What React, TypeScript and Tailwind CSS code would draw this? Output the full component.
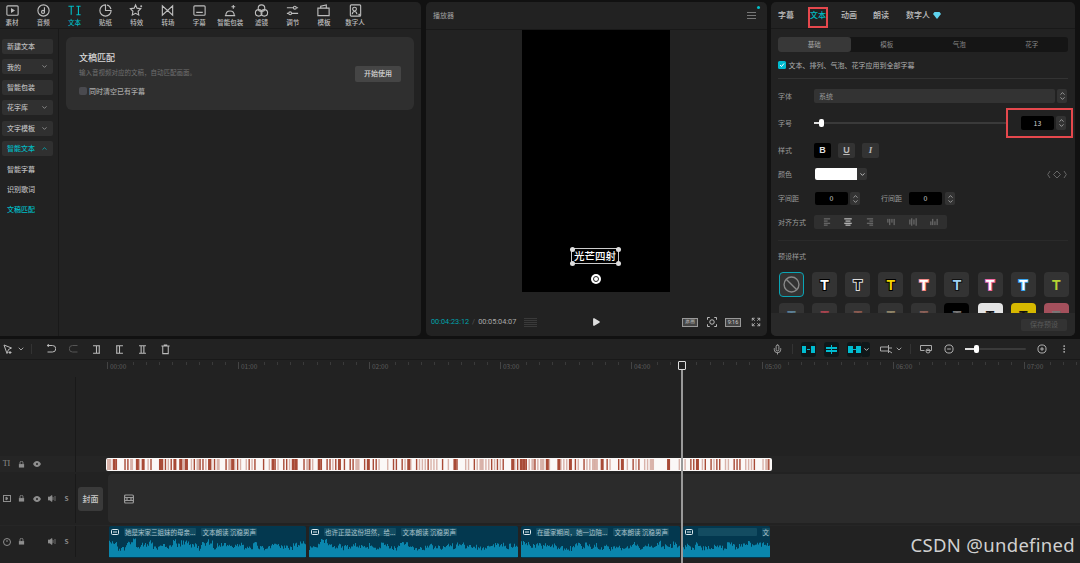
import { ChevronDown, ChevronUp, Mic, MoreVertical, Play } from "lucide-react";
import type { ReactNode } from "react";

const TABS: { label: string; icon: ReactNode }[] = [
  { label: "素材", icon: <><rect x="2" y="3" width="12" height="10" rx="1" /><path d="M7 6.5v3l2.5-1.5z" fill="currentColor" /></> },
  { label: "音频", icon: <><circle cx="8" cy="8" r="6" /><circle cx="7.5" cy="9.5" r="1.6" /><path d="M9 9.5V4.5" /></> },
  { label: "文本", icon: <path d="M1.5 3.5h6M4.5 3.5v9M10 3.5h4.5M12.2 3.5v9M10 12.5h4.5" /> },
  { label: "贴纸", icon: <><path d="M8 2a6 6 0 1 0 6 6H8z" /><path d="M9.5 2.2a6 6 0 0 1 4.3 4.3" /></> },
  { label: "特效", icon: <><path d="M7 2l1.5 3.5 4 .5-2.8 2.8.7 4L7 11l-3.5 1.8.7-4L1.5 6l4-.5z" /><path d="M13 2.5v2M12 3.5h2" /></> },
  { label: "转场", icon: <path d="M2.5 3v10L8 8zM13.5 3v10L8 8z" /> },
  { label: "字幕", icon: <><rect x="2" y="3" width="12" height="10" rx="1" /><path d="M4.5 10h7" /></> },
  { label: "智能包装", icon: <><path d="M2 13.5h11M3 13.5c0-3 1.5-5 4.5-5s4.5 2 4.5 5" /><path d="M11 2v4M9 4h4" /></> },
  { label: "滤镜", icon: <><circle cx="8" cy="5.5" r="3.5" /><circle cx="5" cy="10.5" r="3.5" /><circle cx="11" cy="10.5" r="3.5" /></> },
  { label: "调节", icon: <><path d="M2 5h7M12 5h2M2 11h2M7 11h7" /><circle cx="10.5" cy="5" r="1.5" /><circle cx="5.5" cy="11" r="1.5" /></> },
  { label: "模板", icon: <><path d="M2 5.5h12v8H2z" /><path d="M5 5.5V3.5l6-1.5v3.5" /></> },
  { label: "数字人", icon: <><rect x="2.5" y="2" width="11" height="12" rx="1" /><circle cx="7" cy="6.5" r="2" /><path d="M4.5 12c.3-2 1.2-3 2.5-3s2.2 1 2.5 3M12 11.5v2M11 12.5h2" /></> },
];

const SIDE = [
  { label: "新建文本", box: true },
  { label: "我的", box: true, down: true },
  { label: "智能包装", box: true },
  { label: "花字库", box: true, down: true },
  { label: "文字模板", box: true, down: true },
  { label: "智能文本", box: true, up: true, on: true },
  { label: "智能字幕" },
  { label: "识别歌词" },
  { label: "文稿匹配", on: true },
];

const PRESETS = [
  "text-white [-webkit-text-stroke:2px_#000]",
  "text-[#111] [-webkit-text-stroke:2px_#ddd]",
  "text-[#f5d400] [-webkit-text-stroke:2px_#000]",
  "text-white [-webkit-text-stroke:2px_#f08a8a]",
  "text-[#9fd2f5] [-webkit-text-stroke:2px_#111]",
  "text-white [-webkit-text-stroke:2px_#f06aa8]",
  "text-white [-webkit-text-stroke:2px_#3aa5f0]",
  "text-[#b7d334] [-webkit-text-stroke:2px_#333]",
];

const PRESETS_2 = [
  "bg-[#333] text-[#5b7f95]",
  "bg-[#333] text-[#a8434f]",
  "bg-[#333] text-[#8a5a50]",
  "bg-[#333] text-[#8f8468]",
  "bg-[#333] text-[#8a6058]",
  "bg-black text-[#777]",
  "bg-[#e4e4e4] text-[#111]",
  "bg-[#d6b800] text-[#111]",
  "bg-[#a4505c] text-[#777]",
];

const CLIPS = [
  { width: 197, gap: 3, text: "她是宋家三姐妹的母亲...", voice: "文本朗读 沉稳男声" },
  { width: 209, gap: 3, text: "也许正是这份坦然，给...", voice: "文本朗读 沉稳男声" },
  { width: 159, gap: 3, text: "在盛家期间，她一边陪...", voice: "文本朗读 沉稳男声" },
  { width: 87, gap: 0, text: "", voice: "文" },
];

function rand(seed: number) {
  const x = Math.sin(seed * 91.17) * 43758.5453;
  return x - Math.floor(x);
}

function Glyph({ size = 16, className = "", children }: { size?: number; className?: string; children: ReactNode }) {
  return (
    <svg width={size} height={size} viewBox="0 0 16 16" fill="none" stroke="currentColor" strokeWidth="1.2" className={className}>
      {children}
    </svg>
  );
}

function Stepper() {
  return (
    <div className="flex h-full w-[10px] shrink-0 flex-col items-center justify-center rounded-[2px] bg-[#333] text-[#bbb]">
      <ChevronUp size={7} strokeWidth={2.5} className="-mb-[1px]" />
      <ChevronDown size={7} strokeWidth={2.5} className="-mt-[1px]" />
    </div>
  );
}

function Sidebar() {
  return (
    <div className="flex w-[59px] shrink-0 flex-col gap-[5.4px] border-r border-[#191919] pl-[2px] pr-[5px] pt-[10px]">
      {SIDE.map((s) => (
        <div
          key={s.label}
          className={`flex h-[15px] items-center justify-between rounded-[2px] pl-[5px] pr-[5px] text-[7px] font-medium ${s.box ? "bg-[#303030]" : ""} ${s.on ? "text-[#00bcc4]" : "text-[#bdbdbd]"}`}
        >
          <span>{s.label}</span>
          {s.down && <ChevronDown size={7} strokeWidth={2.5} className="text-[#aaa]" />}
          {s.up && <ChevronUp size={7} strokeWidth={2.5} />}
        </div>
      ))}
    </div>
  );
}

function MediaPanel() {
  return (
    <section className="flex w-[421px] shrink-0 flex-col overflow-hidden rounded-r-[5px] bg-[#222]">
      <div className="flex h-[27px] shrink-0 border-b border-[#191919]">
        {TABS.map((t, i) => (
          <div key={t.label} className={`flex w-[31.2px] flex-col items-center pt-[1px] text-[6.5px] font-medium leading-[8px] first:-ml-[3.6px] ${i === 2 ? "text-[#00bcc4]" : "text-[#bdbdbd]"}`}>
            <Glyph size={15}>{t.icon}</Glyph>
            <span className="whitespace-nowrap">{t.label}</span>
          </div>
        ))}
      </div>
      <div className="flex flex-1">
        <Sidebar />
        <div className="flex-1 px-[7px] pt-[8px]">
          <div className="flex h-[73px] items-center justify-between rounded-[6px] bg-[#2f2f2f] pl-[13px] pr-[13px]">
            <div>
              <div className="text-[9px] font-medium leading-[12px] text-[#d8d8d8]">文稿匹配</div>
              <div className="mt-[4px] text-[6.5px] leading-[9px] text-[#6f6f6f]">输入音视频对应的文稿，自动匹配画面。</div>
              <div className="mt-[9px] flex items-center gap-[2px] text-[7px] font-medium leading-[10px] text-[#a8a8a8]">
                <span className="h-[8px] w-[8px] rounded-[2px] bg-[#4a4a4f]" />
                同时清空已有字幕
              </div>
            </div>
            <div className="flex h-[16px] w-[46px] items-center justify-center rounded-[2px] bg-[#454545] text-[7px] font-medium text-[#d8d8d8]">开始使用</div>
          </div>
        </div>
      </div>
    </section>
  );
}

function PlayerPanel() {
  return (
    <section className="relative ml-[1px] flex w-[341px] shrink-0 flex-col overflow-hidden rounded-[5px] bg-[#222]">
      <div className="flex h-[28px] shrink-0 items-center justify-between border-b border-[#191919] pl-[7px] pr-[11px] text-[7px] text-[#a0a0a0]">
        <span>播放器</span>
        <span className="flex w-[9px] flex-col gap-[2px]">
          <i className="h-px bg-[#777]" />
          <i className="h-px bg-[#777]" />
          <i className="h-px bg-[#777]" />
        </span>
      </div>
      <span className="absolute right-[7px] top-[4px] h-[3px] w-[3px] rounded-full bg-[#00c2cc]" />
      <div className="relative ml-[96px] h-[262px] w-[148px] shrink-0 bg-black">
        <div className="absolute left-[49px] top-[218px] flex h-[16px] w-[48px] items-center justify-center border border-[#ccc] text-[10.5px] font-medium leading-none text-white">
          光芒四射
          <i className="absolute -left-[2.5px] -top-[2.5px] h-[5px] w-[5px] rounded-full bg-[#ddd]" />
          <i className="absolute -right-[2.5px] -top-[2.5px] h-[5px] w-[5px] rounded-full bg-[#ddd]" />
          <i className="absolute -bottom-[2.5px] -left-[2.5px] h-[5px] w-[5px] rounded-full bg-[#ddd]" />
          <i className="absolute -bottom-[2.5px] -right-[2.5px] h-[5px] w-[5px] rounded-full bg-[#ddd]" />
        </div>
        <div className="absolute left-[69px] top-[244px] flex h-[10px] w-[10px] items-center justify-center rounded-full bg-white">
          <span className="h-[6px] w-[6px] rounded-full border-[1.5px] border-[#222]" />
        </div>
      </div>
      <div className="flex flex-1 items-center pb-[1px] pl-[5px] pr-[6px] pt-[17px] font-[Roboto] text-[7.3px]">
        <span className="text-[#00a2ad]">00:04:23:12</span>
        <span className="mx-[3px] text-[#555]">/</span>
        <span className="text-[#aaa]">00:05:04:07</span>
        <span className="ml-[8px] grid h-[10px] w-[13px] grid-cols-2 gap-x-[1px] bg-[repeating-linear-gradient(0deg,#3a3a3a_0_1px,transparent_1px_2px)]" />
        <Play size={10} fill="#ddd" strokeWidth={0} className="ml-[54px] text-[#ddd]" />
        <span className="ml-auto flex h-[9px] w-[16px] items-center justify-center border border-[#999] bg-[#444] text-[5px] text-[#ccc]">原画</span>
        <Glyph size={12} className="ml-[8px] text-[#ccc]">
          <path d="M2 5V2h3M11 2h3v3M14 11v3h-3M5 14H2v-3" />
          <circle cx="8" cy="8" r="3" />
        </Glyph>
        <span className="ml-[7px] flex h-[9px] w-[16px] items-center justify-center border border-[#999] bg-[#444] text-[5.5px] text-[#ccc]">9:16</span>
        <Glyph size={10} className="ml-[10px] text-[#ccc]">
          <path d="M2 6V2h4M10 2h4v4M14 10v4h-4M6 14H2v-4M2 2l4 4M14 2l-4 4M14 14l-4-4M2 14l4-4" />
        </Glyph>
      </div>
    </section>
  );
}

function FieldRow({ label, className, children }: { label: string; className: string; children: ReactNode }) {
  return (
    <div className={`flex items-center ${className}`}>
      <span className="w-[36px] shrink-0 text-[7px] text-[#9a9a9a]">{label}</span>
      {children}
    </div>
  );
}

function NumberBox({ value }: { value: string }) {
  return <div className="flex h-full w-[33px] items-center justify-center rounded-[2px] bg-black text-[7px] text-[#ccc]">{value}</div>;
}

function AlignIcon({ lines, vertical, on }: { lines: string; vertical?: boolean; on?: boolean }) {
  return (
    <Glyph size={10} className={`${on ? "text-[#ddd]" : "text-[#777]"} ${vertical ? "rotate-90" : ""}`}>
      <path d={lines} strokeWidth="1.6" />
    </Glyph>
  );
}

function TextPanel() {
  return (
    <section className="relative flex w-[304px] shrink-0 flex-col overflow-hidden rounded-[5px] bg-[#222]">
      <div className="flex h-[27px] shrink-0 items-center border-b border-[#191919] pl-[7px] text-[8px] font-medium text-[#c0c0c0]">
        <span>字幕</span>
        <span className="ml-[16px] text-[#00bcc4]">文本</span>
        <span className="ml-[15px]">动画</span>
        <span className="ml-[16px]">朗读</span>
        <span className="ml-[17px]">数字人</span>
        <svg width="8" height="7" viewBox="0 0 8 7" className="ml-[3px]"><path d="M1.5 0h5L8 2 4 7 0 2z" fill="#5fd3ee" /></svg>
      </div>
      <div className="flex flex-1 flex-col overflow-hidden px-[7px]">
        <div className="mt-[8px] grid h-[15px] shrink-0 grid-cols-4 rounded-[3px] bg-[#151515] text-center text-[6.5px] leading-[15px] text-[#888]">
          <span className="rounded-[3px] bg-[#383838] text-[#aaa]">基础</span>
          <span>模板</span>
          <span>气泡</span>
          <span>花字</span>
        </div>
        <div className="mt-[8px] flex h-[10px] shrink-0 items-center gap-[3px] text-[7px] text-[#b0b0b0]">
          <span className="flex h-[7.5px] w-[7.5px] items-center justify-center rounded-[1.5px] bg-[#00bcd0]">
            <svg width="6" height="6" viewBox="0 0 6 6"><path d="M1 3l1.5 1.5L5 1.5" stroke="#fff" strokeWidth="1" fill="none" /></svg>
          </span>
          文本、排列、气泡、花字应用到全部字幕
        </div>
        <div className="mt-[8px] h-px shrink-0 bg-[#333]" />
        <FieldRow label="字体" className="mt-[10px] h-[14px] shrink-0">
          <div className="flex h-full w-[241px] items-center rounded-[2px] bg-[#333] pl-[5px] text-[7px] text-[#999]">系统</div>
          <span className="ml-[2px] h-full"><Stepper /></span>
        </FieldRow>
        <FieldRow label="字号" className="mt-[13px] h-[14px] shrink-0">
          <div className="relative h-[2px] w-[194px] rounded-full bg-[#3a3a3a]">
            <span className="absolute left-0 top-0 h-[2px] w-[7px] bg-[#ddd]" />
            <span className="absolute -top-[3px] left-[5px] h-[8px] w-[5px] rounded-[2px] bg-white" />
          </div>
          <span className="ml-[13px] h-full"><NumberBox value="13" /></span>
          <span className="ml-[2px] h-full"><Stepper /></span>
        </FieldRow>
        <FieldRow label="样式" className="mt-[13px] h-[15px] shrink-0">
          <span className="flex h-full w-[17px] items-center justify-center rounded-[2px] bg-black font-['Liberation_Sans'] text-[9px] font-bold text-[#ddd]">B</span>
          <span className="ml-[7px] flex h-full w-[17px] items-center justify-center rounded-[2px] bg-[#333] font-['Liberation_Sans'] text-[9px] font-bold text-[#bbb] underline">U</span>
          <span className="ml-[7px] flex h-full w-[17px] items-center justify-center rounded-[2px] bg-[#333] font-['Liberation_Serif'] text-[9px] font-bold italic text-[#bbb]">I</span>
        </FieldRow>
        <FieldRow label="颜色" className="mt-[10px] h-[12px] shrink-0">
          <span className="ml-[1px] h-full w-[42px] rounded-l-[2px] bg-white" />
          <span className="flex h-full w-[10px] items-center justify-center rounded-r-[2px] bg-[#333] text-[#ccc]">
            <ChevronDown size={7} strokeWidth={3} />
          </span>
          <svg width="20" height="9" viewBox="0 0 20 9" fill="none" stroke="#666" className="ml-auto mr-[1px]">
            <path d="M3 1L.7 4.5 3 8M17 1l2.3 3.5L17 8M10 1l3.5 3.5L10 8 6.5 4.5z" />
          </svg>
        </FieldRow>
        <FieldRow label="字间距" className="mt-[12px] h-[13px] shrink-0">
          <span className="ml-[1px] h-full"><NumberBox value="0" /></span>
          <span className="ml-[2px] h-full"><Stepper /></span>
          <span className="ml-[21px] w-[28px] text-[7px] text-[#9a9a9a]">行间距</span>
          <span className="h-full"><NumberBox value="0" /></span>
          <span className="ml-[3px] h-full"><Stepper /></span>
        </FieldRow>
        <FieldRow label="对齐方式" className="mt-[10px] h-[14px] shrink-0">
          <div className="flex h-full w-[133px] items-center justify-around rounded-[2px] bg-[#2f2f2f] px-[2px]">
            <AlignIcon lines="M3 3h10M3 6.5h6M3 10h10M3 13h6" />
            <AlignIcon on lines="M2 3h12M4 6.5h8M2 10h12M4 13h8" />
            <AlignIcon lines="M3 3h10M7 6.5h6M3 10h10M7 13h6" />
            <AlignIcon vertical lines="M3 3h10M3 6.5h6M3 10h10M3 13h6" />
            <AlignIcon vertical lines="M2 3h12M4 6.5h8M2 10h12M4 13h8" />
            <AlignIcon vertical lines="M3 3h10M7 6.5h6M3 10h10M7 13h6" />
          </div>
        </FieldRow>
        <div className="mt-[11px] h-px shrink-0 bg-[#2a2a2a]" />
        <div className="mt-[10px] h-[10px] shrink-0 text-[7px] leading-[10px] text-[#9a9a9a]">预设样式</div>
        <div className="mt-[11px] grid shrink-0 grid-cols-[repeat(9,25px)] gap-x-[8.1px] gap-y-[6px] pl-[1px]">
          <div className="flex h-[25px] items-center justify-center rounded-[4px] border border-[#0aa5b5] bg-[#333]">
            <svg width="17" height="17" viewBox="0 0 16 16" fill="none" stroke="#888" strokeWidth="1.3"><circle cx="8" cy="8" r="7" /><path d="M3 3l10 10" /></svg>
          </div>
          {PRESETS.map((p) => (
            <div key={p} className="flex h-[25px] items-center justify-center rounded-[4px] bg-[#333]">
              <span className={`font-['Liberation_Sans'] text-[14px] font-bold leading-none [paint-order:stroke_fill] ${p}`}>T</span>
            </div>
          ))}
          {PRESETS_2.map((p, i) => (
            <div key={i} className={`flex h-[25px] items-center justify-center rounded-[4px] text-[14px] font-bold leading-none ${p}`}>
              <span className="font-['Liberation_Sans']">T</span>
            </div>
          ))}
        </div>
      </div>
      <div className="flex h-[23px] shrink-0 items-center justify-end bg-[#292929] pr-[8px]">
        <span className="flex h-[12px] w-[46px] items-center justify-center rounded-[2px] bg-[#333] text-[7px] text-[#5a5a5a]">保存预设</span>
      </div>
      <div className="absolute left-[37px] top-[5px] h-[21px] w-[20px] border-2 border-[#e5484d]" />
      <div className="absolute left-[235px] top-[106px] h-[30px] w-[67px] border-2 border-[#e5484d]" />
    </section>
  );
}

function SplitIcon({ bars }: { bars: string }) {
  return (
    <Glyph size={11} className="text-[#bbb]">
      <path d={bars} strokeWidth="1.6" />
    </Glyph>
  );
}

function TealButton({ children }: { children: ReactNode }) {
  return (
    <span className="flex h-[15px] w-[15px] items-center justify-center rounded-[3px] bg-[#0f1719] text-[#00bcd0]">
      <svg width="13" height="9" viewBox="0 0 13 9" fill="currentColor">{children}</svg>
    </span>
  );
}

function Toolbar() {
  return (
    <div className="flex h-[21px] shrink-0 items-center border-b border-[#191919] pl-[3px] text-[#bbb]">
      <svg width="10" height="11" viewBox="0 0 10 11" fill="none" stroke="currentColor"><path d="M1 1l7.5 3-3 1.5L4 9.5z" /><path d="M7 7v3M5.5 8.5h3" /></svg>
      <ChevronDown size={8} strokeWidth={2.5} className="ml-[4px]" />
      <i className="ml-[6px] h-[10px] w-px bg-[#333]" />
      <svg width="10" height="10" viewBox="0 0 10 10" fill="none" stroke="currentColor" className="ml-[14px]"><path d="M1.5 1.5h5a2.8 2.8 0 0 1 0 6.5h-5" /><path d="M1 1.5l2-1M1 1.5l2 1" /></svg>
      <svg width="10" height="10" viewBox="0 0 10 10" fill="none" stroke="#555" className="ml-[13px]"><path d="M8.5 1.5h-5a2.8 2.8 0 0 0 0 6.5h5" /></svg>
      <span className="ml-[12px]"><SplitIcon bars="M3 2.5h10M3 13.5h10M8 2.5v11M12 2.5v11" /></span>
      <span className="ml-[12px]"><SplitIcon bars="M3 2.5h10M3 13.5h10M8 2.5v11M4 2.5v11" /></span>
      <span className="ml-[12px]"><SplitIcon bars="M3 2.5h10M3 13.5h10M10 2.5v11M6 2.5v11" /></span>
      <Glyph size={11} className="ml-[12px] text-[#bbb]">
        <path d="M2 3h12M4 3v11h8V3M5.5 1.5h5" strokeWidth="1.5" />
      </Glyph>
      <Mic size={11} className="ml-[601px] text-[#aaa]" />
      <i className="ml-[9px] h-[10px] w-px bg-[#333]" />
      <span className="ml-[8px]"><TealButton><path d="M0 1h4v7H0zM9 1h4v7H9zM5 4h3v1H5z" /></TealButton></span>
      <span className="ml-[8px]"><TealButton><path d="M1 2h11v2H1zM1 5h11v2H1zM6 0h1v9H6z" /></TealButton></span>
      <span className="ml-[8px] flex items-center">
        <TealButton><path d="M0 1h5v7H0zM8 1h5v7H8zM5 4h3v1H5z" /></TealButton>
        <span className="flex h-[15px] w-[8px] items-center justify-center rounded-r-[3px] bg-[#0f1719] text-[#ccc]"><ChevronDown size={7} strokeWidth={3} /></span>
      </span>
      <svg width="13" height="10" viewBox="0 0 13 10" fill="none" stroke="#aaa" className="ml-[10px]"><path d="M.5 3h8v4h-8zM8.5 1v8M9 4h3M9 7l3 2" /></svg>
      <ChevronDown size={8} strokeWidth={2.5} className="ml-[2px]" />
      <i className="ml-[7px] h-[10px] w-px bg-[#333]" />
      <svg width="12" height="10" viewBox="0 0 12 10" fill="none" stroke="#aaa" className="ml-[9px]"><path d="M.5 1.5h11v5h-5M.5 1.5v5h4" /><circle cx="8" cy="7" r="2" /></svg>
      <Glyph size={10} className="ml-[12px] text-[#bbb]"><circle cx="8" cy="8" r="6.5" strokeWidth="1.5" /><path d="M5 8h6" strokeWidth="1.5" /></Glyph>
      <div className="relative ml-[11px] h-[2px] w-[61px] rounded-full bg-[#3a3a3a]">
        <span className="absolute left-0 top-0 h-[2px] w-[11px] bg-[#ddd]" />
        <span className="absolute -top-[3px] left-[9px] h-[8px] w-[5px] rounded-[2px] bg-white" />
      </div>
      <Glyph size={10} className="ml-[11px] text-[#bbb]"><circle cx="8" cy="8" r="6.5" strokeWidth="1.5" /><path d="M5 8h6M8 5v6" strokeWidth="1.5" /></Glyph>
      <MoreVertical size={10} className="ml-[12px]" />
    </div>
  );
}

function Ruler() {
  const labels = ["00:00", "01:00", "02:00", "03:00", "04:00", "05:00", "06:00", "07:00"];
  return (
    <div className="flex h-[17px] shrink-0 pl-[107px] pt-[2px]">
      {labels.map((l) => (
        <div key={l} className="relative flex h-[7px] w-[131px] shrink-0 items-start">
          <span className="absolute left-0 top-0 h-[7px] w-px bg-[#444]" />
          <span className="absolute left-[3px] top-0 text-[6.5px] leading-[8px] text-[#5c5c5c]">{l}</span>
          {Array.from({ length: 10 }).map((_, i) => (
            <span key={i} className="w-[13.1px] shrink-0">
              <i className={`block h-[3px] w-px bg-[#3a3a3a] ${i < 2 ? "invisible" : ""}`} />
            </span>
          ))}
        </div>
      ))}
    </div>
  );
}

function TrackIcon({ children }: { children: ReactNode }) {
  return <span className="flex w-[15px] justify-center text-[#8e8e8e] first:-ml-[1px]">{children}</span>;
}

const Lock = () => (
  <svg width="7" height="7" viewBox="0 0 8 8" fill="currentColor"><path d="M1 3.5h6V7.5H1z" /><path d="M2.3 3.5V2a1.7 1.7 0 0 1 3.4 0v1.5" fill="none" stroke="currentColor" /></svg>
);
const Eye = () => (
  <svg width="8" height="6" viewBox="0 0 8 6" fill="currentColor"><path d="M0 3c2-4 6-4 8 0-2 4-6 4-8 0z" /><circle cx="4" cy="3" r="1" fill="#222" /></svg>
);
const Speaker = () => (
  <svg width="8" height="7" viewBox="0 0 8 7" fill="currentColor"><path d="M0 2h1.5L4 .5v6L1.5 5H0zM5 2v3M7 1v5" stroke="currentColor" strokeWidth=".7" /></svg>
);
const Solo = () => <span className="text-[6.5px] font-bold leading-none">S</span>;

function Stripes() {
  const bars = Array.from({ length: 230 }).map((_, i) => {
    const r = rand(i + 3);
    return { x: 1 + (i * 664) / 230, w: r > 0.84 ? 3 : r > 0.3 ? 1.4 : 0, o: rand(i + 70) > 0.5 ? 1 : 0.4 };
  });
  return (
    <svg width="666" height="13" className="block">
      <rect width="666" height="13" rx="2" fill="#fbf8f7" />
      {bars.map((b, i) => (
        <rect key={i} x={b.x} y="1" width={b.w} height="11" fill="#a84a36" opacity={b.o} />
      ))}
    </svg>
  );
}

function Wave({ width, seed }: { width: number; seed: number }) {
  let d = "";
  for (let x = 0; x < width; x += 1) {
    const h = 6 + rand(seed + x * 1.7) * 5 + rand(seed + Math.floor(x / 4)) * 8 * rand(seed + Math.floor(x / 9) * 3);
    d += `M${x} 19V${19 - h}h1V19z`;
  }
  return (
    <svg width={width} height="19" className="block">
      <path d={d} fill="#0a86ad" />
    </svg>
  );
}

function AudioClip({ clip, seed }: { clip: (typeof CLIPS)[number]; seed: number }) {
  return (
    <div className="flex h-[32px] shrink-0 flex-col overflow-hidden rounded-[1.5px] bg-[#03384f]" style={{ width: clip.width, marginRight: clip.gap }}>
      <div className="flex h-[12px] shrink-0 items-center gap-[5px] pl-[2px] text-[6.5px] leading-none text-[#a9c2cc]">
        <svg width="8" height="7" viewBox="0 0 8 7" className="shrink-0" fill="none" stroke="#dfeaef"><rect x=".5" y=".5" width="7" height="5" rx="1" /><path d="M2 3h4" /></svg>
        <span className={`flex h-[8px] items-center whitespace-nowrap rounded-[1px] bg-[#134c61] px-[1px] ${clip.text ? "" : "w-[64px]"}`}>{clip.text}</span>
        <span className="flex h-[8px] items-center whitespace-nowrap rounded-[1px] bg-[#134c61] px-[1px]">{clip.voice}</span>
      </div>
      <div className="mt-auto pb-[1px]"><Wave width={clip.width} seed={seed} /></div>
    </div>
  );
}

function Tracks() {
  return (
    <div className="flex flex-1 flex-col">
      <div className="flex h-[79px] shrink-0">
        <div className="w-[76px] border-r border-[#191919]" />
      </div>
      <div className="flex h-[16px] shrink-0 items-center bg-[#252525]">
        <div className="flex h-full w-[76px] shrink-0 items-center border-r border-[#191919]">
          <TrackIcon><span className="font-['Liberation_Serif'] text-[8px] leading-none">TI</span></TrackIcon>
          <TrackIcon><Lock /></TrackIcon>
          <TrackIcon><Eye /></TrackIcon>
        </div>
        <div className="ml-[30px]"><Stripes /></div>
      </div>
      <div className="mt-[2px] flex h-[49px] shrink-0">
        <div className="flex h-full w-[76px] shrink-0 items-center border-r border-[#191919]">
          <TrackIcon>
            <svg width="8" height="7" viewBox="0 0 8 7" fill="none" stroke="currentColor"><rect x=".5" y=".5" width="7" height="6" /><path d="M3 2v3l2-1.5z" fill="currentColor" /></svg>
          </TrackIcon>
          <TrackIcon><Lock /></TrackIcon>
          <TrackIcon><Eye /></TrackIcon>
          <TrackIcon><Speaker /></TrackIcon>
          <TrackIcon><Solo /></TrackIcon>
        </div>
        <div className="ml-[2px] flex h-[24px] w-[25px] shrink-0 items-center justify-center self-center rounded-[3px] bg-[#3a3a3a] text-[8px] font-medium text-[#ccc]">封面</div>
        <div className="ml-[5px] flex h-full flex-1 items-center rounded-l-[4px] bg-[#2b2b2b] pl-[16px]">
          <svg width="10" height="10" viewBox="0 0 10 10" fill="none" stroke="#999" strokeWidth="1.2"><rect x=".6" y="1" width="8.8" height="8" rx="1" /><path d="M.6 3.5h8.8M.6 6.5h8.8M3 3.5v3M7 3.5v3" /></svg>
        </div>
      </div>
      <div className="mt-[2px] flex h-[32px] shrink-0 border-t border-[#262626]">
        <div className="flex h-full w-[76px] shrink-0 items-center border-r border-[#191919]">
          <TrackIcon>
            <svg width="8" height="8" viewBox="0 0 8 8" fill="none" stroke="currentColor"><circle cx="4" cy="4" r="3.5" /><path d="M4 4V2" /></svg>
          </TrackIcon>
          <TrackIcon><Lock /></TrackIcon>
          <TrackIcon><span /></TrackIcon>
          <TrackIcon><Speaker /></TrackIcon>
          <TrackIcon><Solo /></TrackIcon>
        </div>
        <div className="ml-[33px] flex">
          {CLIPS.map((c, i) => (
            <AudioClip key={i} clip={c} seed={i * 37 + 5} />
          ))}
        </div>
      </div>
    </div>
  );
}

export default function App() {
  return (
    <div className="relative flex h-[563px] w-[1080px] flex-col overflow-hidden bg-[#111] font-['Noto_Sans_CJK_SC','Noto_Sans',sans-serif]">
      <div className="flex h-[339px] shrink-0 gap-[4px] pb-[3px] pt-[2px]">
        <MediaPanel />
        <PlayerPanel />
        <TextPanel />
      </div>
      <div className="flex flex-1 flex-col bg-[#222]">
        <Toolbar />
        <Ruler />
        <Tracks />
      </div>
      <div className="absolute bottom-0 left-[681px] top-[361px] w-[2px] bg-[#999]">
        <span className="absolute -left-[3px] top-0 h-[9px] w-[8px] rounded-[1px] border border-[#ddd] bg-[#222]" />
      </div>
      <div className="absolute bottom-[6px] right-[5px] font-['Noto_Sans'] text-[18.5px] leading-[24px] tracking-[0.3px] text-[#d0d0d0]">CSDN @undefined</div>
    </div>
  );
}
